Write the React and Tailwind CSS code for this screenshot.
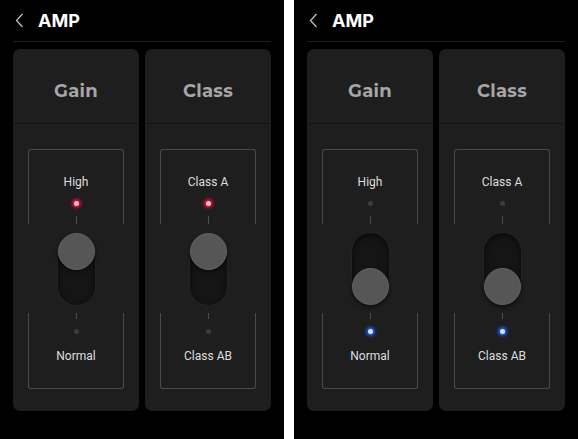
import React from 'react';

const font = { fontFamily: 'Inter, "Noto Sans", sans-serif' };

function Chevron() {
  return (
    <svg width="9" height="15" viewBox="0 0 9 15" className="block">
      <path d="M7.5 1 L1.5 7.5 L7.5 14" fill="none" stroke="#c8c8c8" strokeWidth="1.2" />
    </svg>
  );
}

function Led({ on, color }) {
  if (!on) return <div className="w-[5px] h-[5px] rounded-full bg-[#3c3c3c]" />;
  if (color === 'red')
    return <div className="w-[5px] h-[5px] rounded-full bg-[#ffc2cf] shadow-[0_0_3px_2px_rgba(240,10,60,0.95)]" />;
  return <div className="w-[5px] h-[5px] rounded-full bg-[#d8e4ff] shadow-[0_0_3px_2px_rgba(30,95,255,0.95)]" />;
}

function Toggle({ up }) {
  return (
    <div className={`w-[39px] h-[74px] rounded-full bg-[#151515] border border-[#232323] shadow-[inset_0_2px_6px_rgba(0,0,0,0.6)] flex flex-col items-center ${up ? 'justify-start' : 'justify-end'}`}>
      <div className="w-[37px] h-[37px] rounded-full bg-[#565656] border border-[#636363] shadow-[0_2px_4px_rgba(0,0,0,0.6)]" />
    </div>
  );
}

function Card({ title, top, bottom, up, color }) {
  return (
    <div className="w-[126px] h-[362px] rounded-[7px] bg-[#1e1e1e] flex flex-col">
      <div className="h-[74px] flex items-center justify-center pt-[10px]">
        <span className="text-[18px] font-bold text-[#a6a6a6] tracking-[0.3px]" style={{ fontFamily: 'Montserrat, Inter, sans-serif' }}>{title}</span>
      </div>
      <div className="h-px bg-[#141414]" />
      <div className="mx-[15px] mt-[25px] flex flex-col" style={{ fontFamily: 'Roboto, "Liberation Sans", sans-serif' }}>
        <div className="h-[75px] border-x border-t border-[#4a4a4a] rounded-t-[3px] flex flex-col items-center pt-[24px]">
          <span className="text-[12px] leading-[16px] text-[#dedede]">{top}</span>
          <div className="mt-[11px]"><Led on={up} color={color} /></div>
          <div className="mt-auto w-px h-[8px] bg-[#4c4c4c]" />
        </div>
        <div className="h-[89px] flex items-center justify-center">
          <Toggle up={up} />
        </div>
        <div className="h-[76px] border-x border-b border-[#4a4a4a] rounded-b-[3px] flex flex-col items-center">
          <div className="w-px h-[6px] bg-[#4c4c4c]" />
          <div className="mt-[10px]"><Led on={!up} color={color} /></div>
          <span className="mt-[14px] text-[12px] leading-[16px] text-[#dedede]">{bottom}</span>
        </div>
      </div>
    </div>
  );
}

function Screen({ up, color }) {
  return (
    <div className="w-[284px] h-[439px] bg-black flex flex-col" style={font}>
      <div className="h-[41px] flex items-center pl-[15px]">
        <Chevron />
        <span className="ml-[14px] text-[18px] font-bold text-white leading-none">AMP</span>
      </div>
      <div className="mx-[13px] h-px bg-[#202020]" />
      <div className="mt-[7px] px-[13px] flex gap-[6px]">
        <Card title="Gain" top="High" bottom="Normal" up={up} color={color} />
        <Card title="Class" top="Class A" bottom="Class AB" up={up} color={color} />
      </div>
    </div>
  );
}

export default function App() {
  return (
    <div className="w-[578px] h-[439px] flex bg-white">
      <Screen up color="red" />
      <div className="w-[10px] bg-white" />
      <Screen up={false} color="blue" />
    </div>
  );
}
